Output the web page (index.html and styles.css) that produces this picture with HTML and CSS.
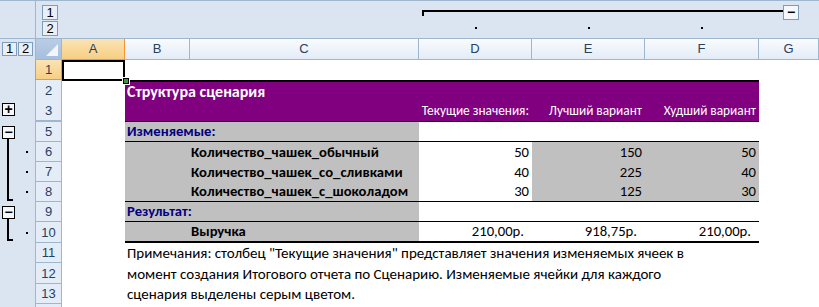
FILE: index.html
```html
<!DOCTYPE html>
<html lang="ru">
<head>
    <meta charset="UTF-8">
    <title>Структура сценария</title>
    <link rel="stylesheet" href="styles.css">
</head>
<body>
    <div class="sheet">
        <!-- Column outline area -->
        <div class="top">
            <div class="levels">
                <div class="lvl-btn">1</div>
                <div class="lvl-btn">2</div>
            </div>
            <div class="bracket">
                <div class="bracket-line"></div>
                <div class="ol-btn small">&minus;</div>
            </div>
            <div class="tdot col-d"><span class="dot"></span></div>
            <div class="tdot col-e"><span class="dot"></span></div>
            <div class="tdot col-f"><span class="dot"></span></div>
        </div>

        <!-- Column headers -->
        <div class="row head">
            <div class="gut levels-left">
                <div class="lvl-btn">1</div>
                <div class="lvl-btn">2</div>
            </div>
            <div class="corner"><span class="tri"></span></div>
            <div class="ch active">A</div>
            <div class="ch">B</div>
            <div class="ch">C</div>
            <div class="ch">D</div>
            <div class="ch">E</div>
            <div class="ch">F</div>
            <div class="ch">G</div>
        </div>

        <div class="row h20">
            <div class="gut"></div>
            <div class="rh active">1</div>
            <div class="c sel"></div>
            <div class="c"></div><div class="c"></div><div class="c"></div><div class="c"></div><div class="c"></div><div class="c"></div>
        </div>

        <div class="row h21">
            <div class="gut"></div>
            <div class="rh">2</div>
            <div class="c"></div>
            <div class="c span2 purple title top-thick">Структура сценария</div>
            <div class="c purple top-thick"></div>
            <div class="c purple top-thick"></div>
            <div class="c purple top-thick"></div>
            <div class="c"></div>
        </div>

        <div class="row h21">
            <div class="gut"><div class="lv1"><div class="ol-btn">+</div></div></div>
            <div class="rh hidden-below">3</div>
            <div class="c"></div>
            <div class="c purple bottom-line"></div>
            <div class="c purple bottom-line"></div>
            <div class="c purple num caption bottom-line">Текущие значения:</div>
            <div class="c purple num caption bottom-line">Лучший вариант</div>
            <div class="c purple num caption bottom-line">Худший вариант</div>
            <div class="c"></div>
        </div>

        <div class="row h20">
            <div class="gut"><div class="lv1 open"><div class="ol-btn">&minus;</div><div class="bar"></div></div></div>
            <div class="rh">5</div>
            <div class="c"></div>
            <div class="c span2 gray group bottom-line">Изменяемые:</div>
            <div class="c bottom-line"></div>
            <div class="c bottom-line"></div>
            <div class="c bottom-line"></div>
            <div class="c"></div>
        </div>

        <div class="row h20">
            <div class="gut"><div class="lv1"><div class="bar"></div></div><div class="lv2"><span class="dot"></span></div></div>
            <div class="rh">6</div>
            <div class="c"></div>
            <div class="c gray"></div>
            <div class="c gray label">Количество_чашек_обычный</div>
            <div class="c num">50</div>
            <div class="c gray num">150</div>
            <div class="c gray num">50</div>
            <div class="c"></div>
        </div>

        <div class="row h20">
            <div class="gut"><div class="lv1"><div class="bar"></div></div><div class="lv2"><span class="dot"></span></div></div>
            <div class="rh">7</div>
            <div class="c"></div>
            <div class="c gray"></div>
            <div class="c gray label">Количество_чашек_со_сливками</div>
            <div class="c num">40</div>
            <div class="c gray num">225</div>
            <div class="c gray num">40</div>
            <div class="c"></div>
        </div>

        <div class="row h20">
            <div class="gut"><div class="lv1"><div class="end"></div></div><div class="lv2"><span class="dot"></span></div></div>
            <div class="rh">8</div>
            <div class="c"></div>
            <div class="c gray bottom-line"></div>
            <div class="c gray label bottom-line">Количество_чашек_с_шоколадом</div>
            <div class="c num bottom-line">30</div>
            <div class="c gray num bottom-line">125</div>
            <div class="c gray num bottom-line">30</div>
            <div class="c"></div>
        </div>

        <div class="row h20">
            <div class="gut"><div class="lv1 open"><div class="ol-btn">&minus;</div><div class="bar"></div></div></div>
            <div class="rh">9</div>
            <div class="c"></div>
            <div class="c span2 gray group bottom-line">Результат:</div>
            <div class="c bottom-line"></div>
            <div class="c bottom-line"></div>
            <div class="c bottom-line"></div>
            <div class="c"></div>
        </div>

        <div class="row h21">
            <div class="gut"><div class="lv1"><div class="end"></div></div><div class="lv2"><span class="dot"></span></div></div>
            <div class="rh">10</div>
            <div class="c"></div>
            <div class="c gray bottom-thick"></div>
            <div class="c gray label bottom-thick">Выручка</div>
            <div class="c num money bottom-thick">210,00р.</div>
            <div class="c num money bottom-thick">918,75р.</div>
            <div class="c num money bottom-thick">210,00р.</div>
            <div class="c"></div>
        </div>

        <div class="row h20">
            <div class="gut"></div>
            <div class="rh">11</div>
            <div class="c"></div>
            <div class="c note">Примечания: столбец "Текущие значения" представляет значения изменяемых ячеек в</div>
            <div class="c"></div><div class="c"></div><div class="c"></div><div class="c"></div><div class="c"></div>
        </div>

        <div class="row h21">
            <div class="gut"></div>
            <div class="rh">12</div>
            <div class="c"></div>
            <div class="c note">момент создания Итогового отчета по Сценарию. Изменяемые ячейки для каждого</div>
            <div class="c"></div><div class="c"></div><div class="c"></div><div class="c"></div><div class="c"></div>
        </div>

        <div class="row h20">
            <div class="gut"></div>
            <div class="rh">13</div>
            <div class="c"></div>
            <div class="c note">сценария выделены серым цветом.</div>
            <div class="c"></div><div class="c"></div><div class="c"></div><div class="c"></div><div class="c"></div>
        </div>

        <div class="row h20">
            <div class="gut"></div>
            <div class="rh"></div>
            <div class="c"></div>
            <div class="c"></div><div class="c"></div><div class="c"></div><div class="c"></div><div class="c"></div><div class="c"></div>
        </div>
    </div>
</body>
</html>
```

FILE: styles.css
```css
* {
    box-sizing: border-box;
}

body {
    margin: 0;
    background-color: white;
    font-family: Carlito, "Liberation Sans", Arial, sans-serif;
    overflow: hidden;
}

.sheet {
    width: 819px;
    height: 307px;
    overflow: hidden;
}

/* Shared column template: gutter, row header, A..G */
.top,
.row {
    display: grid;
    grid-template-columns: 35px 27px 63px 65px 229px 113px 113px 114px 60px;
}

/* Top outline area */
.top {
    height: 39px;
    grid-template-rows: 21px 18px;
    background-color: #dbe5f1;
    border-top: 1px solid #9eb6ce;
    border-bottom: 1px solid #9eb6ce;
}

.levels {
    grid-column: 2;
    grid-row: 1 / 3;
    display: flex;
    flex-direction: column;
    gap: 1px;
    padding: 4px 0 0 6px;
    border-left: 1px solid #9eb6ce;
}

.lvl-btn {
    width: 16px;
    height: 15px;
    border: 1px solid #7f9db9;
    background-color: #e9eff8;
    color: #000;
    font-family: "Liberation Sans", Arial, sans-serif;
    font-size: 13px;
    line-height: 13px;
    text-align: center;
}

.bracket {
    grid-column: 6 / 10;
    grid-row: 1;
    display: flex;
    align-items: flex-start;
    padding: 4px 20px 0 3px;
}

.bracket-line {
    flex: 1;
    height: 6px;
    margin-top: 5px;
    border-top: 2px solid #000;
    border-left: 2px solid #000;
}

.ol-btn {
    width: 13px;
    height: 13px;
    border: 1px solid #000;
    background-color: #f4f7fb;
    color: #000;
    font-family: "Liberation Sans", Arial, sans-serif;
    font-weight: bold;
    font-size: 14px;
    line-height: 10px;
    text-align: center;
}

.ol-btn.small {
    width: 16px;
    height: 15px;
    border-color: #7f9db9;
    line-height: 13px;
}

.tdot {
    grid-row: 2;
    display: flex;
    justify-content: center;
    padding-top: 5px;
}

.col-d { grid-column: 6; }
.col-e { grid-column: 7; }
.col-f { grid-column: 8; }

.dot {
    display: block;
    width: 2px;
    height: 2px;
    background-color: #000;
}

/* Column headers */
.head {
    height: 21px;
}

.gut {
    background-color: #dbe5f1;
    display: flex;
}

.levels-left {
    gap: 1px;
    padding: 3px 0 0 2px;
}

.levels-left .lvl-btn {
    width: 15px;
    height: 14px;
    line-height: 12px;
}

.corner {
    background: linear-gradient(#b9cde5, #a6bfde);
    border: 1px solid #9eb6ce;
    border-top: none;
    display: flex;
    align-items: flex-end;
    justify-content: flex-end;
    padding: 0 3px 3px 0;
}

.tri {
    width: 0;
    height: 0;
    border-left: 12px solid transparent;
    border-bottom: 12px solid #f2f6fb;
}

.ch {
    background: linear-gradient(#f9fbfd, #e4ecf7);
    border-right: 1px solid #9eb6ce;
    border-bottom: 1px solid #9eb6ce;
    color: #27415f;
    font-family: "Liberation Sans", Arial, sans-serif;
    font-size: 13px;
    text-align: center;
    line-height: 20px;
}

.ch.active,
.rh.active {
    background: linear-gradient(#fbe3b3, #f7cf84);
    border-color: #f29536;
}

/* Rows */
.h20 { height: 20px; }
.h21 { height: 21px; }

.rh {
    background-color: #e4ecf7;
    border-left: 1px solid #9eb6ce;
    border-right: 1px solid #9eb6ce;
    border-bottom: 1px solid #9eb6ce;
    color: #27415f;
    font-family: "Liberation Sans", Arial, sans-serif;
    font-size: 13px;
    display: flex;
    align-items: center;
    justify-content: center;
}

.rh.hidden-below {
    border-bottom-width: 2px;
}

.lv1 {
    width: 17px;
    display: flex;
    flex-direction: column;
    padding-left: 2px;
}

.lv1 .ol-btn {
    margin-top: 2px;
}

.lv1.open .ol-btn {
    margin-top: 4px;
}

.lv1.open .bar {
    flex: 1;
}

.bar {
    width: 2px;
    height: 100%;
    margin-left: 5px;
    background-color: #000;
}

.end {
    width: 6px;
    height: 19px;
    margin-left: 5px;
    border-left: 2px solid #000;
    border-bottom: 2px solid #000;
}

.lv2 {
    width: 18px;
    display: flex;
    align-items: center;
    justify-content: center;
    padding-left: 1px;
}

/* Cells */
.c {
    display: flex;
    align-items: flex-end;
    padding: 0 3px 1px 2px;
    font-size: 14.67px;
    color: #000;
    white-space: nowrap;
    min-width: 0;
}

.span2 {
    grid-column: span 2;
}

.sel {
    position: relative;
    box-shadow: inset 0 0 0 2px #000;
    margin-bottom: -1px;
}

.sel::after {
    content: "";
    position: absolute;
    right: -4px;
    bottom: -3px;
    width: 4px;
    height: 4px;
    background-color: #3c9a3c;
    border: 1px solid #000;
    box-shadow: 0 0 0 1px #fff;
}

.purple {
    background-color: #800080;
    color: #fff;
}

.title {
    font-weight: bold;
    font-size: 16px;
    padding-bottom: 1px;
}

.caption {
    font-size: 13.33px;
    padding-bottom: 2px;
}

.gray {
    background-color: #c0c0c0;
}

.group {
    color: #000080;
    font-weight: bold;
}

.label {
    font-weight: bold;
    padding-left: 1px;
}

.num {
    justify-content: flex-end;
}

.money {
    padding-right: 8px;
}

.note {
    font-size: 15px;
    overflow: visible;
}

.top-thick {
    border-top: 2px solid #000;
}

.bottom-line {
    border-bottom: 1px solid #000;
}

.bottom-thick {
    border-bottom: 2px solid #000;
}
```
